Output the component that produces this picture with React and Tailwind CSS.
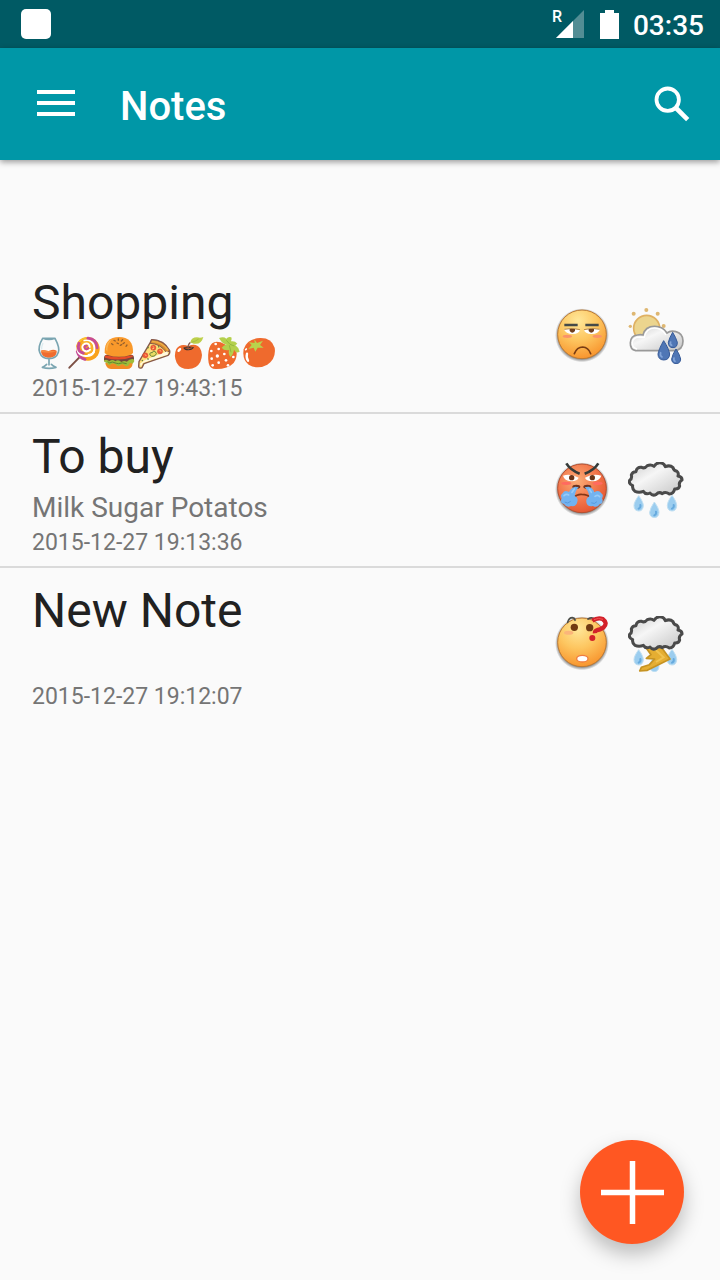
function Glass() {
  return (
    <svg viewBox="3 3 105 108" className="h-9 w-[35px]" role="img" aria-label="Wine">
      <path d="M30 47 C40 41 45 50 56 47 Q67 42 77 47 C78 61 68 68 54 68 C41 68 30 61 30 47Z" fill="#ef6c2f" />
      <path d="M30 47 C40 41 45 50 56 47 L77 49 Q60 56 30 51Z" fill="#f58a42" />
      <path
        d="M35 10 C26 25 22 41 26 52 Q32 71 54 71 Q76 71 82 52 C86 41 80 25 72 10 Z M35 10 Q54 17 72 10 M54 72 V90 M47 88 Q40 95 34 97 Q54 103 75 97 Q66 94 61 88"
        fill="none"
        stroke="#7aa5b1"
        strokeWidth="5"
        strokeLinejoin="round"
        strokeLinecap="round"
      />
      <path d="M36 24 Q31 36 32 43" fill="none" stroke="#dcecf0" strokeWidth="4" />
    </svg>
  )
}

function Lollipop() {
  return (
    <svg viewBox="3 3 105 108" className="h-9 w-[35px]" role="img" aria-label="Lollipop">
      <path d="M43 64 L10 98" stroke="#7d5045" strokeWidth="6" strokeLinecap="round" />
      <circle cx="66" cy="42" r="35" fill="#f9a21b" />
      <g fill="none" strokeLinecap="round">
        <path d="M33 33 Q39 12 60 9" stroke="#fbbf2c" strokeWidth="6" />
        <path d="M34 50 Q39 68 57 73" stroke="#c64c96" strokeWidth="9" />
        <path d="M37 32 Q28 59 58 63 Q76 65 84 51" stroke="#fff" strokeWidth="6" />
        <path d="M39 25 Q31 49 52 54" stroke="#c64c96" strokeWidth="9" />
        <path d="M66 10 Q92 13 93 38" stroke="#c64c96" strokeWidth="9" />
        <path d="M55 17 Q87 14 85 45 Q82 59 68 59" stroke="#fff" strokeWidth="6" />
        <path d="M50 25 Q78 15 77 42 Q72 55 60 50" stroke="#f9b52a" strokeWidth="8" />
        <path d="M72 44 Q61 54 52 45 Q44 32 57 26 Q70 23 71 36" stroke="#fff" strokeWidth="6" />
        <path d="M67 39 Q60 47 56 38 Q55 31 62 32" stroke="#c64c96" strokeWidth="6" />
      </g>
    </svg>
  )
}

function Burger() {
  return (
    <svg viewBox="3 3 105 108" className="h-9 w-[35px]" role="img" aria-label="Burger">
      <path d="M13 84 H95 Q94 102 78 102 H30 Q15 101 13 84Z" fill="#f18b24" />
      <rect x="9" y="59" width="90" height="24" rx="10" fill="#74473c" />
      <path
        d="M9 76 Q17 71 25 79 Q34 71 43 79 Q52 72 61 81 Q70 75 77 80 Q88 70 98 73 Q103 80 94 86 Q86 81 83 91 Q76 97 70 90 Q62 85 56 92 Q49 96 44 88 Q34 83 28 89 Q21 93 18 83 Q9 84 9 76Z"
        fill="#9ebc39"
      />
      <path d="M20 80 Q25 87 34 81 Q48 86 52 86 Q65 81 77 86" fill="none" stroke="#5f8830" strokeWidth="3" />
      <path d="M12 61 Q53 72 95 61 V66 Q53 80 12 68Z" fill="#e54b28" />
      <path d="M11 53 C10 22 25 6 54 6 C83 6 97 22 96 53 Q91 64 54 65 Q17 64 11 53Z" fill="#f9992b" />
      <path d="M15 44 Q14 21 32 13 Q18 30 19 50Z" fill="#fbb553" />
      <path
        d="M39 16 L43 18 M52 12 V16 M65 14 L61 18 M32 26 L36 29 M48 24 L52 26 M70 23 L66 26 M58 31 L62 29 M78 30 L75 34"
        stroke="#96602c"
        strokeWidth="4"
        strokeLinecap="round"
      />
    </svg>
  )
}

function Pizza() {
  return (
    <svg viewBox="3 3 105 108" className="h-9 w-[35px]" role="img" aria-label="Pizza">
      <path
        d="M47 14 Q84 14 101 47 Q103 56 96 61 L24 86 L18 98 Q9 102 8 94 L9 80 L43 22Z"
        fill="#ffde78"
        stroke="#87594b"
        strokeWidth="4"
        strokeLinejoin="round"
      />
      <path d="M47 14 Q82 14 101 48 L91 52 Q73 26 42 25Z" fill="#d78b2d" stroke="#87594b" strokeWidth="3" />
      <path d="M49 17 Q80 18 98 44 L94 47 Q77 22 47 22Z" fill="#efad46" />
      <path d="M94 49 Q100 60 89 61 L20 84 L15 95 L12 86 L27 75Z" fill="#fff8df" />
      <g fill="#ef5837" stroke="#c64a2e" strokeWidth="1">
        <circle cx="52" cy="38" r="8" />
        <circle cx="72" cy="49" r="8" />
        <circle cx="28" cy="61" r="8" />
      </g>
      <path d="M50 34 l5 4 M48 42 l6 -2 M71 45 l4 5 M27 58 l4 5" stroke="#ffc36d" strokeWidth="3" />
      <path d="M41 57 Q43 51 49 53 Q52 44 58 50 Q65 56 57 62 Q44 68 41 57Z" fill="#e9dc62" stroke="#65813a" strokeWidth="3" />
      <path d="M34 40 l4 -3 M66 35 l4 1 M34 71 l4 2 M17 76 l4 1" stroke="#65813a" strokeWidth="4" />
    </svg>
  )
}

function Apple() {
  return (
    <svg viewBox="3 3 105 108" className="h-9 w-[35px]" role="img" aria-label="Apple">
      <path d="M52 33 Q76 23 87 40 Q98 58 88 81 Q77 102 52 102 Q27 102 17 83 Q7 61 16 42 Q28 24 52 33Z" fill="#ef6a2d" />
      <path d="M37 38 Q52 31 69 37 Q65 46 52 46 Q40 46 37 38Z" fill="#333" />
      <path d="M43 39 Q54 43 64 38" fill="none" stroke="#d95622" strokeWidth="3" />
      <path d="M52 42 Q49 31 57 23" fill="none" stroke="#87594b" strokeWidth="4" strokeLinecap="round" />
      <path d="M58 22 Q61 7 78 7 Q89 10 97 6 Q91 30 68 26Z" fill="#bdd04b" />
      <path d="M61 22 Q73 20 83 12" fill="none" stroke="#99b63b" strokeWidth="2" />
      <ellipse cx="25" cy="45" rx="7" ry="4" transform="rotate(-45 25 45)" fill="#fff" />
    </svg>
  )
}

function Strawberry() {
  return (
    <svg viewBox="3 3 105 108" className="h-9 w-[35px]" role="img" aria-label="Strawberry">
      <path d="M10 38 Q18 14 44 22 L91 45 Q95 68 83 84 Q66 102 31 102 Q12 103 8 84 Q4 58 10 38Z" fill="#ef6a2d" />
      <path
        d="M39 9 Q53 4 61 11 Q67 3 76 7 Q79 14 75 19 Q87 17 94 26 L88 31 Q98 37 101 50 Q91 57 84 44 Q82 59 73 66 Q65 54 70 45 Q54 48 47 38 Q54 29 62 29 Q49 27 39 9Z"
        fill="#b4d04c"
      />
      <path d="M61 16 L72 28 L85 33 M70 31 L75 52" fill="none" stroke="#92b83e" strokeWidth="3" />
      <g fill="#fff">
        <circle cx="29" cy="27" r="4" />
        <circle cx="38" cy="42" r="4" />
        <circle cx="16" cy="48" r="4" />
        <circle cx="55" cy="57" r="4" />
        <circle cx="34" cy="63" r="5" />
        <circle cx="17" cy="71" r="4" />
        <circle cx="82" cy="66" r="4" />
        <circle cx="60" cy="76" r="4" />
        <circle cx="38" cy="83" r="4" />
        <circle cx="20" cy="91" r="4" />
        <circle cx="66" cy="91" r="4" />
      </g>
    </svg>
  )
}

function Tomato() {
  return (
    <svg viewBox="3 3 105 108" className="h-9 w-[35px]" role="img" aria-label="Tomato">
      <path d="M57 9 Q92 8 101 38 Q106 71 79 89 Q50 105 23 89 Q3 73 8 43 Q17 11 57 9Z" fill="#ef6a2d" />
      <path
        d="M40 13 L48 24 L66 17 L57 30 L68 38 L50 38 L43 50 L38 38 L22 42 L32 30 L24 22 L41 24Z"
        fill="#b8d34c"
      />
      <path d="M18 56 Q15 68 21 77" fill="none" stroke="#fff" strokeWidth="7" strokeLinecap="round" />
      <path d="M14 44 l2 -2" stroke="#fff" strokeWidth="5" strokeLinecap="round" />
    </svg>
  )
}

function Gradients() {
  return (
    <svg className="absolute h-0 w-0" aria-hidden="true">
      <defs>
        <radialGradient id="face" cx="0.42" cy="0.22" r="0.8">
          <stop offset="0" stopColor="#ffe79a" />
          <stop offset="0.5" stopColor="#fdc660" />
          <stop offset="1" stopColor="#f8932c" />
        </radialGradient>
        <radialGradient id="angry" cx="0.4" cy="0.35" r="0.7">
          <stop offset="0" stopColor="#fbae78" />
          <stop offset="0.55" stopColor="#f3794d" />
          <stop offset="1" stopColor="#e4532f" />
        </radialGradient>
        <linearGradient id="cloud" x1="0" y1="0" x2="1" y2="1">
          <stop offset="0" stopColor="#c9c9c9" />
          <stop offset="0.4" stopColor="#f6f6f6" />
          <stop offset="1" stopColor="#c4c4c4" />
        </linearGradient>
        <radialGradient id="shade">
          <stop offset="0.86" stopColor="#000" stopOpacity="0.5" />
          <stop offset="1" stopColor="#000" stopOpacity="0" />
        </radialGradient>
      </defs>
    </svg>
  )
}

function Unamused() {
  return (
    <svg viewBox="27 24 168 168" className="size-14" role="img" aria-label="Unamused">
      <circle cx="111" cy="106" r="81" fill="url(#shade)" />
      <circle cx="111" cy="103" r="73" fill="url(#face)" stroke="#bd7b35" strokeWidth="3" />
      <path d="M58 75 H98 M121 75 H161" stroke="#454a48" strokeWidth="8" />
      <path d="M57 88 Q80 83 105 89 Q103 101 84 102 Q61 102 57 88Z M117 89 Q141 82 165 88 Q161 102 140 102 Q119 101 117 89Z" fill="#fff" />
      <path d="M58 88 Q81 82 105 89 M117 89 Q141 82 164 88" fill="none" stroke="#b88847" strokeWidth="3" />
      <path d="M74 87 H90 V93 Q82 103 74 93Z M131 87 H147 V93 Q139 103 131 93Z" fill="#70401f" />
      <ellipse cx="67" cy="109" rx="14" ry="5" fill="#fa9369" />
      <ellipse cx="157" cy="109" rx="14" ry="5" fill="#fa9369" />
      <path d="M88 161 Q96 141 113 141 Q130 142 137 161" fill="none" stroke="#7a3d13" strokeWidth="5" strokeLinecap="round" />
    </svg>
  )
}

function Steaming() {
  return (
    <svg viewBox="27 27 168 168" className="size-14" role="img" aria-label="Angry">
      <circle cx="111" cy="109" r="81" fill="url(#shade)" />
      <circle cx="111" cy="106" r="73" fill="url(#angry)" stroke="#b45031" strokeWidth="3" />
      <ellipse cx="64" cy="91" rx="15" ry="5" fill="#ff6a60" />
      <ellipse cx="158" cy="91" rx="15" ry="5" fill="#ff6a60" />
      <path d="M54 68 Q77 61 101 74 Q98 84 79 85 Q58 83 54 68Z M120 74 Q142 61 169 68 Q164 84 142 85 Q123 84 120 74Z" fill="#fff" />
      <circle cx="80" cy="74" r="8" fill="#6b3518" />
      <circle cx="142" cy="74" r="8" fill="#6b3518" />
      <path d="M64 31 Q76 51 104 62 M160 31 Q148 51 119 62" fill="none" stroke="#353b39" strokeWidth="8" />
      <ellipse cx="94" cy="101" rx="12" ry="6" fill="#6f3420" />
      <ellipse cx="127" cy="101" rx="12" ry="6" fill="#6f3420" />
      <path d="M85 134 Q96 123 110 124 Q128 124 137 134" fill="none" stroke="#853716" strokeWidth="5" />
      <g fill="#73b3f0">
        <path d="M91 101 Q77 105 72 117 Q58 110 53 121 Q45 126 50 136 Q43 150 57 153 Q65 165 78 159 Q94 162 97 146 Q101 135 89 129 Q92 111 101 103Z" />
        <path d="M130 101 Q145 105 148 118 Q161 109 169 121 Q177 126 171 136 Q178 150 164 154 Q156 166 144 159 Q127 163 124 148 Q122 136 133 130 Q130 112 119 103Z" />
      </g>
      <path d="M57 128 q7 -6 14 -2 M150 130 q9 -6 14 1 M81 118 l7 -10 M139 118 l-6 -9" fill="none" stroke="#98cbf8" strokeWidth="5" strokeLinecap="round" />
      <path d="M60 148 q8 6 16 -2 M140 150 q9 5 15 -3" fill="none" stroke="#589ade" strokeWidth="3" strokeLinecap="round" />
    </svg>
  )
}

function Puzzled() {
  return (
    <svg viewBox="27 27 168 168" className="size-14" role="img" aria-label="Puzzled">
      <circle cx="111" cy="109" r="81" fill="url(#shade)" />
      <circle cx="111" cy="106" r="73" fill="url(#face)" stroke="#bd7b35" strokeWidth="3" />
      <path d="M68 46 Q72 32 82 32 Q90 33 90 40 M129 36 Q141 28 151 38" fill="none" stroke="#4b4d48" strokeWidth="5" strokeLinecap="round" />
      <circle cx="88" cy="61" r="11" fill="#713a12" />
      <circle cx="134" cy="62" r="11" fill="#713a12" />
      <ellipse cx="71" cy="77" rx="14" ry="6" fill="#fbb57a" />
      <ellipse cx="112" cy="155" rx="17" ry="10" fill="#fff" stroke="#ef7c40" strokeWidth="4" />
      <path d="M142 41 Q158 31 173 36 Q189 48 176 61 Q164 69 157 69 Q149 71 150 79" fill="none" stroke="#d3202a" strokeWidth="13" />
      <path d="M147 38 Q160 31 174 37" fill="none" stroke="#f45450" strokeWidth="3" />
      <circle cx="142" cy="93" r="9" fill="#d3202a" />
    </svg>
  )
}

function SunShower() {
  return (
    <svg viewBox="249 24 168 168" className="size-14" role="img" aria-label="Showers">
      <g fill="#deb772">
        <circle cx="304" cy="30" r="6" />
        <circle cx="266" cy="41" r="6" />
        <circle cx="338" cy="41" r="6" />
        <circle cx="256" cy="79" r="5" />
        <circle cx="356" cy="78" r="6" />
      </g>
      <circle cx="305" cy="85" r="39" fill="#ecd58e" stroke="#dfb163" strokeWidth="5" />
      <path
        d="M272 152 Q255 148 256 128 Q257 107 277 105 Q288 103 294 105 Q300 79 329 79 Q354 79 366 99 Q377 90 393 95 Q414 101 414 123 Q414 150 388 152Z"
        fill="url(#cloud)"
        stroke="#999"
        strokeWidth="5"
      />
      <path d="M276 147 Q261 142 262 127 Q264 111 285 111 L298 112 Q303 84 329 84 Q351 84 363 105" fill="none" stroke="#fff" strokeWidth="4" />
      <g fill="#4f76b5" stroke="#365a98" strokeWidth="3">
        <path d="M383 97 Q393 113 397 127 Q397 143 384 143 Q370 143 370 127 Q373 114 383 97Z" />
        <path d="M356 122 Q372 147 374 162 Q373 180 356 180 Q339 179 339 162 Q341 148 356 122Z" />
        <path d="M393 147 Q404 163 407 177 Q406 191 393 191 Q380 190 380 177 Q382 164 393 147Z" />
      </g>
      <path d="M347 158 q-3 9 4 13 M377 126 q-3 7 3 10 M387 174 q-2 7 3 10" fill="none" stroke="#82a4d8" strokeWidth="5" strokeLinecap="round" />
    </svg>
  )
}

function StormCloud() {
  return (
    <path
      d="M270 115 Q261 108 263 98 Q250 92 254 82 Q262 77 259 66 Q262 56 273 56 Q275 41 290 43 Q299 48 307 38 Q318 33 327 40 Q335 27 349 30 Q357 31 361 41 Q375 35 384 44 Q386 53 396 55 Q402 60 399 69 Q412 72 411 81 Q400 88 404 99 Q402 109 389 108 Q386 122 373 123 Q361 115 352 122 Q342 115 334 124 Q322 130 315 120 Q302 126 295 115 Q282 120 270 115Z"
      fill="url(#cloud)"
      stroke="#4a4a4a"
      strokeWidth="9"
      strokeLinejoin="round"
    />
  )
}

function Rain() {
  return (
    <svg viewBox="249 27 168 168" className="size-14" role="img" aria-label="Rain">
      <StormCloud />
      <g fill="#9bcdef" stroke="#c0dff2" strokeWidth="3">
        <path d="M281 128 Q295 147 295 158 Q294 174 281 174 Q267 173 267 158 Q267 147 281 128Z" />
        <path d="M328 147 Q342 166 342 178 Q341 194 328 194 Q314 193 314 178 Q315 166 328 147Z" />
        <path d="M381 127 Q395 146 395 158 Q394 174 381 174 Q367 173 367 158 Q367 146 381 127Z" />
      </g>
      <path d="M286 156 q2 8 -5 11 M333 176 q2 8 -5 11 M386 156 q2 8 -5 11" fill="none" stroke="#66aade" strokeWidth="6" strokeLinecap="round" />
    </svg>
  )
}

function Thunder() {
  return (
    <svg viewBox="249 27 168 168" className="size-14" role="img" aria-label="Thunderstorm">
      <g fill="#9bcdef" stroke="#c0dff2" strokeWidth="3">
        <path d="M281 128 Q295 147 295 158 Q294 174 281 174 Q267 173 267 158 Q267 147 281 128Z" />
        <path d="M328 147 Q342 166 342 178 Q341 194 328 194 Q314 193 314 178 Q315 166 328 147Z" />
        <path d="M381 127 Q395 146 395 158 Q394 174 381 174 Q367 173 367 158 Q367 146 381 127Z" />
      </g>
      <path d="M286 156 q2 8 -5 11 M386 156 q2 8 -5 11" fill="none" stroke="#66aade" strokeWidth="6" strokeLinecap="round" />
      <path d="M302 121 H349 L375 156 L307 190 L284 192 L289 181 L313 173 L329 156 L304 154 L318 143Z" fill="#e5ae32" stroke="#c69322" strokeWidth="5" strokeLinejoin="round" />
      <path d="M329 126 L356 151 L333 165" fill="none" stroke="#f1c34f" strokeWidth="6" />
      <StormCloud />
    </svg>
  )
}

const notes = [
  {
    title: 'Shopping',
    body: (
      <>
        <Glass />
        <Lollipop />
        <Burger />
        <Pizza />
        <Apple />
        <Strawberry />
        <Tomato />
      </>
    ),
    date: '2015-12-27 19:43:15',
    Mood: Unamused,
    Weather: SunShower,
  },
  {
    title: 'To buy',
    body: 'Milk Sugar Potatos',
    date: '2015-12-27 19:13:36',
    Mood: Steaming,
    Weather: Rain,
  },
  {
    title: 'New Note',
    body: '',
    date: '2015-12-27 19:12:07',
    Mood: Puzzled,
    Weather: Thunder,
  },
]

function StatusBar() {
  return (
    <div className="flex h-12 items-center bg-[#005a64] pr-4 pl-[21px] text-white">
      <div className="size-[30px] rounded-[5px] bg-white" />
      <div className="relative ml-auto">
        <svg viewBox="0 0 28 28" className="size-7" role="img" aria-label="Signal">
          <path d="M28 0 V28 H0Z" fill="#528d94" />
          <path d="M17 11 V28 H0Z" fill="#fff" />
        </svg>
        <span className="absolute -top-px -left-1 text-[16px] leading-4 font-medium">R</span>
      </div>
      <svg viewBox="0 0 19 29" className="ml-4 h-[29px] w-[19px]" role="img" aria-label="Battery">
        <path d="M5 0 H14 V3 H19 V29 H0 V3 H5Z" fill="#fff" />
      </svg>
      <span className="ml-3.5 pt-1 text-[28px] leading-8 font-medium">03:35</span>
    </div>
  )
}

function Toolbar() {
  return (
    <header className="flex h-28 items-center bg-[#0097a7] px-6 text-white shadow-[0_2px_6px_rgba(0,0,0,0.4)]">
      <button type="button" aria-label="Menu" className="flex size-16 items-center justify-center">
        <svg viewBox="0 0 38 28" className="h-7 w-[38px]">
          <path d="M0 2 H38 M0 13 H38 M0 24 H38" stroke="currentColor" strokeWidth="4" />
        </svg>
      </button>
      <h1 className="ml-8 pt-1.5 text-[40px] leading-12 font-medium">Notes</h1>
      <button type="button" aria-label="Search" className="ml-auto flex size-12 items-center justify-center">
        <svg viewBox="0 0 36 36" className="size-9" fill="none" stroke="currentColor">
          <circle cx="13.7" cy="13.7" r="11.2" strokeWidth="3.8" />
          <path d="M22 22 L33.7 33.7" strokeWidth="4.6" />
        </svg>
      </button>
    </header>
  )
}

function NoteRow({ note }) {
  const { title, body, date, Mood, Weather } = note
  return (
    <li className="border-b-2 border-[#dadada] last:border-b-0">
      <a href="#note" className="flex items-center pt-[13px] pr-9 pb-[9px] pl-8">
        <div className="min-w-0 flex-1">
          <h2 className="text-[48px] leading-[60px] text-[#212121]">{title}</h2>
          <div className="flex h-[42px] items-center text-[28px] leading-10 text-[#757575]">{body}</div>
          <time className="block text-[23px] leading-7 text-[#757575]">{date}</time>
        </div>
        <div className="flex gap-[18px] pb-1">
          <Mood />
          <Weather />
        </div>
      </a>
    </li>
  )
}

export default function App() {
  return (
    <div className="min-h-screen bg-[#fafafa] font-['Roboto',sans-serif]">
      <Gradients />
      <StatusBar />
      <Toolbar />
      <ul className="pt-[100px]">
        {notes.map((note) => (
          <NoteRow key={note.title} note={note} />
        ))}
      </ul>
      <button
        type="button"
        aria-label="Add note"
        className="fixed right-9 bottom-9 flex size-26 items-center justify-center rounded-full bg-[#ff5722] shadow-[0_10px_20px_rgba(0,0,0,0.25)]"
      >
        <svg viewBox="0 0 64 64" className="size-16">
          <path d="M32.5 1 V64 M1 32.5 H64" stroke="#fff" strokeWidth="5.5" />
        </svg>
      </button>
    </div>
  )
}
